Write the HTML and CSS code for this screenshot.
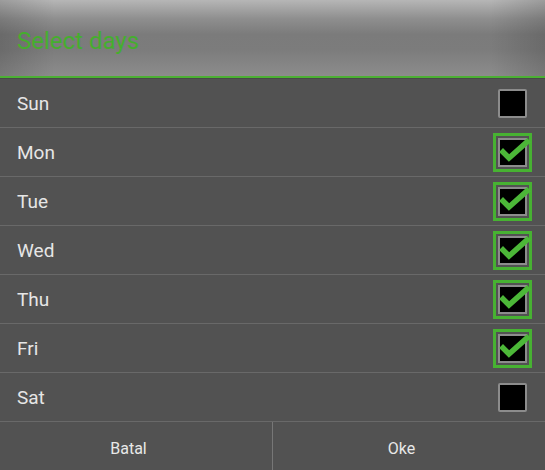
FILE: index.html
```html
<!DOCTYPE html>
<html lang="en">
<head>
    <meta charset="UTF-8">
    <meta name="viewport" content="width=device-width, initial-scale=1.0">
    <title>Select days</title>
    <link rel="stylesheet" href="styles.css">
</head>
<body>
    <div class="dialog">
        <div class="dialog-title">Select days</div>

        <ul class="day-list">
            <li class="day"><span>Sun</span><span class="check"></span></li>
            <li class="day"><span>Mon</span><span class="check checked"><svg viewBox="0 0 29 29"><polyline points="5,14 11,20 29,4"/></svg></span></li>
            <li class="day"><span>Tue</span><span class="check checked"><svg viewBox="0 0 29 29"><polyline points="5,14 11,20 29,4"/></svg></span></li>
            <li class="day"><span>Wed</span><span class="check checked"><svg viewBox="0 0 29 29"><polyline points="5,14 11,20 29,4"/></svg></span></li>
            <li class="day"><span>Thu</span><span class="check checked"><svg viewBox="0 0 29 29"><polyline points="5,14 11,20 29,4"/></svg></span></li>
            <li class="day"><span>Fri</span><span class="check checked"><svg viewBox="0 0 29 29"><polyline points="5,14 11,20 29,4"/></svg></span></li>
            <li class="day"><span>Sat</span><span class="check"></span></li>
        </ul>

        <div class="buttons">
            <button>Batal</button>
            <button>Oke</button>
        </div>
    </div>
</body>
</html>
```

FILE: styles.css
```css
body {
    margin: 0;
    background: #525252;
    font-family: Roboto, "Liberation Sans", sans-serif;
}
.dialog {
    width: 545px;
    height: 470px;
    overflow: hidden;
}
.dialog-title {
    height: 78px;
    box-sizing: border-box;
    padding: 27px 0 0 17px;
    font-size: 24px;
    color: #45ae2e;
    border-bottom: 2px solid #4cb034;
    background:
        linear-gradient(to right, rgba(0,0,0,0.14), rgba(0,0,0,0) 10%, rgba(0,0,0,0) 90%, rgba(0,0,0,0.14)),
        linear-gradient(#b6b6b6, #8e8e8e 25%, #7b7b7b 45%, #7c7c7c 65%, #8c8c8c);
}
.day-list {
    list-style: none;
    margin: 0;
    padding: 1px 0 0;
    background: #474747;
}
.day {
    height: 48px;
    display: flex;
    align-items: center;
    justify-content: space-between;
    padding: 0 18px 0 17px;
    background: #525252;
    border-bottom: 1px solid #696969;
    color: #e6e6e6;
    font-size: 19px;
}
.check {
    position: relative;
    width: 25px;
    height: 25px;
    border: 2px solid #8c8c8c;
    border-radius: 2px;
    background: #000;
}
.check.checked {
    border-radius: 0;
    outline: 3px solid #47b232;
    outline-offset: 2px;
}
.check svg {
    position: absolute;
    left: -2px;
    top: -2px;
    width: 29px;
    height: 29px;
    overflow: visible;
}
.check polyline {
    fill: none;
    stroke: #4cb738;
    stroke-width: 5.5;
    stroke-linecap: square;
}
.buttons {
    display: flex;
    height: 48px;
}
.buttons button {
    flex: 1;
    background: #525252;
    border: none;
    color: #e8e8e8;
    font-family: inherit;
    font-size: 16px;
    padding: 4px 15px 0 0;
}
.buttons button + button {
    border-left: 1px solid #777;
}
```
